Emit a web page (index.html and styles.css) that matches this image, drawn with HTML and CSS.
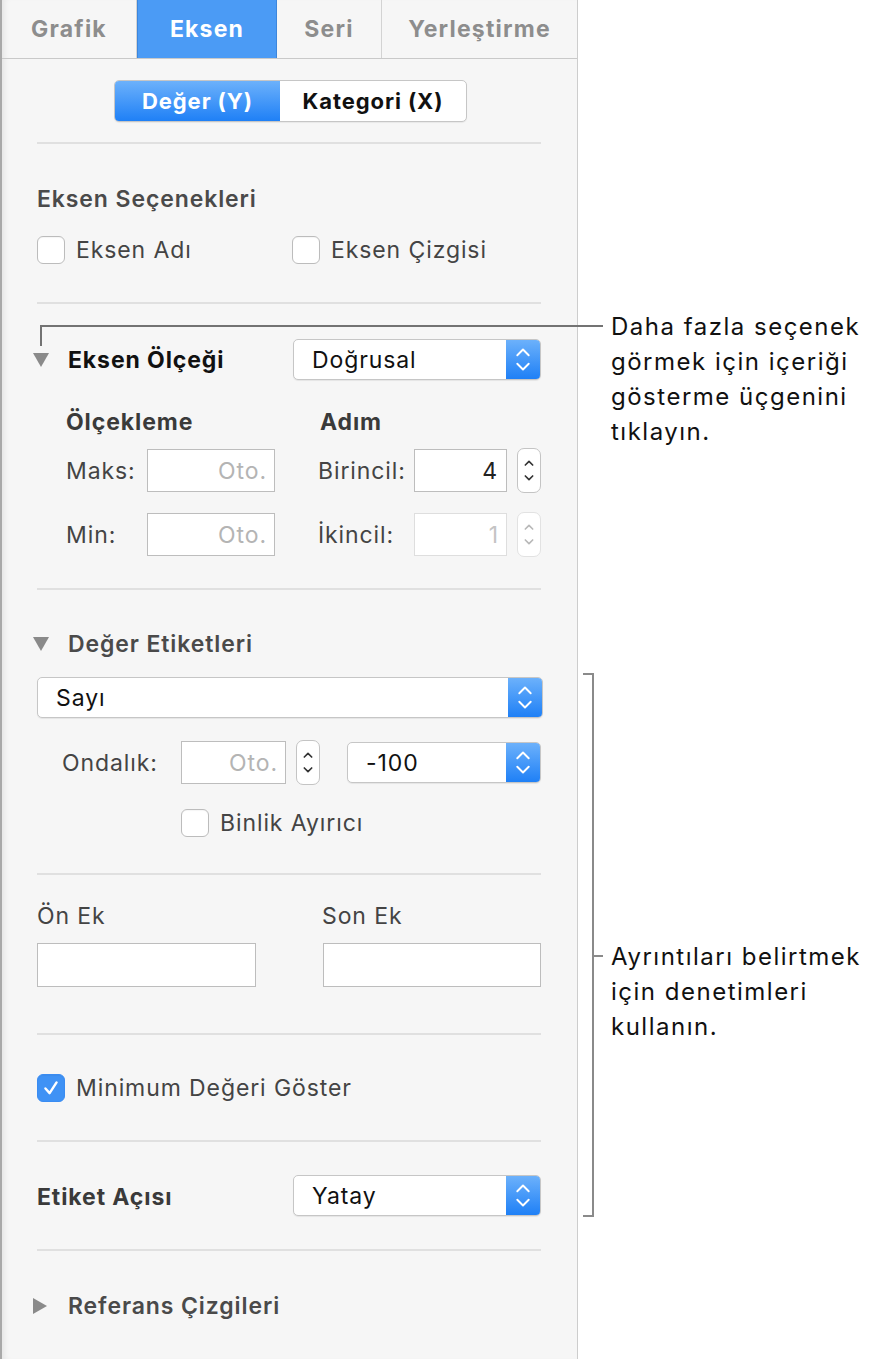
FILE: index.html
```html
<!DOCTYPE html>
<html lang="tr">
<head>
    <meta charset="utf-8"/>
    <title>Eksen</title>
    <link rel="stylesheet" href="styles.css">
</head>
<body>
<div class="page">
    <div class="panel">
        <div class="tabs">
            <div class="tab tab-grafik">Grafik</div>
            <div class="tab tab-eksen active">Eksen</div>
            <div class="tab tab-seri">Seri</div>
            <div class="tab tab-yer">Yerleştirme</div>
        </div>
        <div class="seg-wrap">
            <div class="seg">
                <span class="seg-item on">Değer (Y)</span>
                <span class="seg-item">Kategori (X)</span>
            </div>
        </div>
        <hr/>

        <div class="sec sec-options">
            <div class="heading">Eksen Seçenekleri</div>
            <div class="two-col check-row">
                <label class="check"><span class="box"></span>Eksen Adı</label>
                <label class="check"><span class="box"></span>Eksen Çizgisi</label>
            </div>
        </div>
        <hr/>

        <div class="sec sec-scale">
            <div class="two-col scale-head">
                <div class="disclose"><span class="tri down"></span><span class="strong">Eksen Ölçeği</span></div>
                <div class="select"><span class="sel-text">Doğrusal</span><span class="sel-btn"><svg viewBox="0 0 34 41"><path d="M11 16 L17 10 L23 16 M11 25 L17 31 L23 25"/></svg></span></div>
            </div>
            <div class="scale-grid">
                <div class="subhead">Ölçekleme</div>
                <div class="subhead">Adım</div>
                <div class="field-row">
                    <span class="lbl lbl-maks">Maks:</span>
                    <span class="input in-oto"><span class="ph">Oto.</span></span>
                </div>
                <div class="field-row">
                    <span class="lbl lbl-step">Birincil:</span>
                    <span class="input in-step"><span class="val">4</span></span>
                    <span class="stepper"><svg viewBox="0 0 24 44"><path d="M8 16 L12 12 L16 16 M8 28 L12 32 L16 28"/></svg></span>
                </div>
                <div class="field-row">
                    <span class="lbl lbl-maks">Min:</span>
                    <span class="input in-oto"><span class="ph">Oto.</span></span>
                </div>
                <div class="field-row">
                    <span class="lbl lbl-step">İkincil:</span>
                    <span class="input in-step off"><span class="ph">1</span></span>
                    <span class="stepper off"><svg viewBox="0 0 24 44"><path d="M8 16 L12 12 L16 16 M8 28 L12 32 L16 28"/></svg></span>
                </div>
            </div>
        </div>
        <hr/>

        <div class="sec sec-labels">
            <div class="heading disclose"><span class="tri down"></span>Değer Etiketleri</div>
            <div class="select wide"><span class="sel-text">Sayı</span><span class="sel-btn"><svg viewBox="0 0 34 41"><path d="M11 16 L17 10 L23 16 M11 25 L17 31 L23 25"/></svg></span></div>
            <div class="decimal-row">
                <span class="lbl lbl-dec">Ondalık:</span>
                <span class="input in-dec"><span class="ph">Oto.</span></span>
                <span class="stepper"><svg viewBox="0 0 24 44"><path d="M8 16 L12 12 L16 16 M8 28 L12 32 L16 28"/></svg></span>
                <div class="select sel-neg"><span class="sel-text">-100</span><span class="sel-btn"><svg viewBox="0 0 34 41"><path d="M11 16 L17 10 L23 16 M11 25 L17 31 L23 25"/></svg></span></div>
            </div>
            <label class="check thousands"><span class="box"></span>Binlik Ayırıcı</label>
        </div>
        <hr/>

        <div class="sec sec-affix">
            <div class="affix-grid">
                <span class="lbl">Ön Ek</span>
                <span class="lbl">Son Ek</span>
                <span class="input in-affix"></span>
                <span class="input in-affix"></span>
            </div>
        </div>
        <hr/>

        <div class="sec sec-min">
            <label class="check"><span class="box checked"><svg viewBox="0 0 28 28"><path d="M8 14.5 L12.5 19.5 L20 8"/></svg></span>Minimum Değeri Göster</label>
        </div>
        <hr/>

        <div class="sec sec-angle">
            <div class="two-col">
                <span class="strong gray">Etiket Açısı</span>
                <div class="select"><span class="sel-text">Yatay</span><span class="sel-btn"><svg viewBox="0 0 34 41"><path d="M11 16 L17 10 L23 16 M11 25 L17 31 L23 25"/></svg></span></div>
            </div>
        </div>
        <hr/>

        <div class="sec sec-ref">
            <div class="heading disclose"><span class="tri right"></span>Referans Çizgileri</div>
        </div>
    </div>

    <div class="notes">
        <p class="note note-top">Daha fazla seçenek<br/>görmek için içeriği<br/>gösterme üçgenini<br/>tıklayın.</p>
        <p class="note note-bottom">Ayrıntıları belirtmek<br/>için denetimleri<br/>kullanın.</p>
    </div>

    <!-- callout leader lines -->
    <div class="lead lead-h"></div>
    <div class="lead lead-v"></div>
    <div class="lead bracket"></div>
    <div class="lead bracket-tick"></div>
</div>
</body>
</html>
```

FILE: styles.css
```css
body {
    margin: 0;
    padding: 0;
    background: #fff;
    font-family: Inter, "Noto Sans", sans-serif;
    color: #444;
}
.page {
    position: relative;
    display: flex;
    width: 872px;
    height: 1359px;
    overflow: hidden;
}
.panel {
    width: 575px;
    height: 1359px;
    flex: none;
    background: #f6f6f6;
    border-left: 2px solid #a9a9a9;
    border-right: 1px solid #cdcdcd;
    box-shadow: inset 6px 0 6px -4px rgba(0,0,0,0.08);
    letter-spacing: 0.9px;
}

/* tabs */
.tabs {
    display: flex;
    height: 58px;
    border-bottom: 1px solid #c9c9c9;
}
.tab {
    display: flex;
    align-items: center;
    justify-content: center;
    font-size: 23px;
    font-weight: 700;
    color: #8d8d8d;
    border-right: 1px solid #d3d3d3;
    letter-spacing: 1.2px;
}
.tab-grafik { width: 134px; }
.tab-eksen { width: 138px; }
.tab-seri { width: 104px; }
.tab-yer { flex: 1; border-right: none; }
.tab.active {
    background: #4b9bf5;
    color: #fff;
    border-left: 1px solid #3c86dc;
    border-right: 1px solid #3c86dc;
}

/* segmented control */
.seg-wrap {
    display: flex;
    padding: 21px 0 0 112px;
}
.seg {
    display: flex;
    height: 40px;
    border: 1px solid #c6c6c6;
    border-radius: 5px;
    background: #fff;
    overflow: hidden;
    box-shadow: 0 1px 1px rgba(0,0,0,0.06);
}
.seg-item {
    display: flex;
    align-items: center;
    justify-content: center;
    width: 186px;
    font-size: 22px;
    font-weight: 700;
    color: #111;
    letter-spacing: 0.9px;
}
.seg-item.on {
    width: 165px;
    color: #fff;
    background: linear-gradient(#6cb1fb, #1f80f6);
}

hr {
    height: 2px;
    margin: 0 36px 0 35px;
    border: none;
    background: #e0e0e0;
}
.seg-wrap + hr { margin-top: 20px; }

.sec { padding: 0 36px 0 35px; }

.heading {
    height: 24px;
    display: flex;
    align-items: center;
    font-size: 23px;
    font-weight: 600;
    color: #4a4a4a;
}
.strong {
    font-size: 23px;
    font-weight: 700;
    color: #111;
}
.strong.gray { color: #3a3a3a; }
.lbl {
    font-size: 23px;
    color: #444;
}

.two-col {
    display: grid;
    grid-template-columns: 256px 1fr;
    align-items: center;
}

/* checkbox */
.check {
    display: flex;
    align-items: center;
    height: 28px;
    font-size: 23px;
    color: #444;
}
.box {
    width: 26px;
    height: 26px;
    margin-right: 11px;
    border: 1px solid #bcbcbc;
    border-radius: 6px;
    background: #fff;
    box-shadow: inset 0 1px 1px rgba(0,0,0,0.04);
}
.box.checked {
    display: flex;
    border-color: #3a8cf2;
    background: #3f92f5;
}
.box.checked svg { width: 26px; height: 26px; }
.box.checked path {
    fill: none;
    stroke: #fff;
    stroke-width: 2.6;
    stroke-linecap: round;
    stroke-linejoin: round;
}

/* disclosure triangles */
.disclose {
    display: flex;
    align-items: center;
}
.tri {
    width: 0;
    height: 0;
    margin: 0 19px 0 -4px;
}
.tri.down {
    border-left: 8px solid transparent;
    border-right: 8px solid transparent;
    border-top: 14px solid #8a8a8a;
}
.tri.right {
    margin-right: 21px;
    border-top: 8px solid transparent;
    border-bottom: 8px solid transparent;
    border-left: 14px solid #8a8a8a;
}

/* pop-up menu */
.select {
    display: flex;
    height: 39px;
    border: 1px solid #c6c6c6;
    border-radius: 5px;
    background: #fff;
    overflow: hidden;
    box-shadow: 0 1px 1px rgba(0,0,0,0.07);
}
.sel-text {
    flex: 1;
    display: flex;
    align-items: center;
    padding-left: 18px;
    font-size: 23px;
    color: #111;
}
.sel-btn {
    width: 34px;
    background: linear-gradient(#6cb1fb, #1f80f6);
}
.sel-btn svg { width: 34px; height: 39px; display: block; }
.sel-btn path, .stepper path {
    fill: none;
    stroke: #fff;
    stroke-width: 2;
    stroke-linecap: round;
    stroke-linejoin: round;
}

/* text fields */
.input {
    display: flex;
    align-items: center;
    justify-content: flex-end;
    box-sizing: border-box;
    height: 43px;
    padding-right: 7px;
    border: 1px solid #bdbdbd;
    background: #fff;
    font-size: 23px;
}
.input .ph { color: #b4b4b4; }
.input .val { color: #222; padding-right: 1px; }
.input.off { border-color: #dedede; }
.input.off .ph { color: #c4c4c4; }

.stepper {
    display: block;
    box-sizing: border-box;
    width: 24px;
    height: 45px;
    border: 1px solid #c4c4c4;
    border-radius: 7px;
    background: #fff;
}
.stepper svg { width: 22px; height: 43px; display: block; }
.stepper path { stroke: #333; stroke-width: 1.8; }
.stepper.off { border-color: #e2e2e2; }
.stepper.off path { stroke: #b8b8b8; }

/* Eksen Seçenekleri */
.sec-options { padding-top: 43px; padding-bottom: 38px; }
.sec-options .check-row { margin-top: 25px; grid-template-columns: 255px 1fr; }

/* Eksen Ölçeği */
.sec-scale { padding-top: 35px; padding-bottom: 31px; }
.scale-grid {
    display: grid;
    grid-template-columns: 252px 1fr;
    padding-left: 29px;
    margin-top: 30px;
}
.subhead {
    height: 24px;
    display: flex;
    align-items: center;
    font-size: 23px;
    font-weight: 700;
    color: #3a3a3a;
    margin-bottom: 14px;
}
.subhead + .subhead { padding-left: 2px; }
.field-row {
    display: flex;
    align-items: center;
    height: 45px;
    margin-bottom: 19px;
}
.field-row:nth-last-child(-n+2) { margin-bottom: 0; }
.lbl-maks { width: 81px; }
.lbl-step { width: 96px; }
.in-oto { width: 128px; }
.in-step { width: 93px; margin-right: 10px; }

/* Değer Etiketleri */
.sec-labels { padding-top: 42px; padding-bottom: 36px; }
.sec-labels .heading { margin-bottom: 21px; }
.select.wide { width: 100%; }
.decimal-row {
    display: flex;
    align-items: center;
    height: 45px;
    margin-top: 22px;
}
.lbl-dec { width: 144px; padding-left: 25px; box-sizing: border-box; }
.in-dec { width: 105px; margin-right: 10px; }
.sel-neg { flex: 1; margin-left: 27px; }
.thousands { margin: 24px 0 0 144px; }

/* Ön Ek / Son Ek */
.sec-affix { padding-top: 29px; padding-bottom: 46px; }
.affix-grid {
    display: grid;
    grid-template-columns: 219px 1fr;
    column-gap: 67px;
    row-gap: 15px;
    align-items: center;
}
.affix-grid .lbl { height: 24px; display: flex; align-items: center; }
.affix-grid .lbl + .lbl { margin-left: -1px; }
.in-affix { height: 44px; }

/* Minimum */
.sec-min { padding-top: 39px; padding-bottom: 38px; }

/* Etiket Açısı */
.sec-angle { padding-top: 33px; padding-bottom: 33px; }
.sec-angle .strong { padding-top: 3px; }

/* Referans */
.sec-ref { padding-top: 43px; }

/* notes */
.notes {
    padding-left: 33px;
    width: 262px;
    flex: none;
}
.note {
    margin: 0;
    font-size: 24px;
    line-height: 35px;
    color: #111;
    letter-spacing: 1.5px;
    white-space: nowrap;
}
.note-top { margin-top: 309px; }
.note-bottom { margin-top: 490px; }

/* leader lines over the panel */
.lead {
    position: absolute;
    background: #737373;
}
.lead-h { left: 40px; top: 325px; width: 563px; height: 2px; }
.lead-v { left: 40px; top: 325px; width: 2px; height: 21px; }
.bracket {
    left: 583px;
    top: 673px;
    width: 9px;
    height: 540px;
    background: none;
    border: 2px solid #8a8a8a;
    border-left: none;
}
.bracket-tick { left: 593px; top: 955px; width: 10px; height: 2px; background: #8a8a8a; }
```
